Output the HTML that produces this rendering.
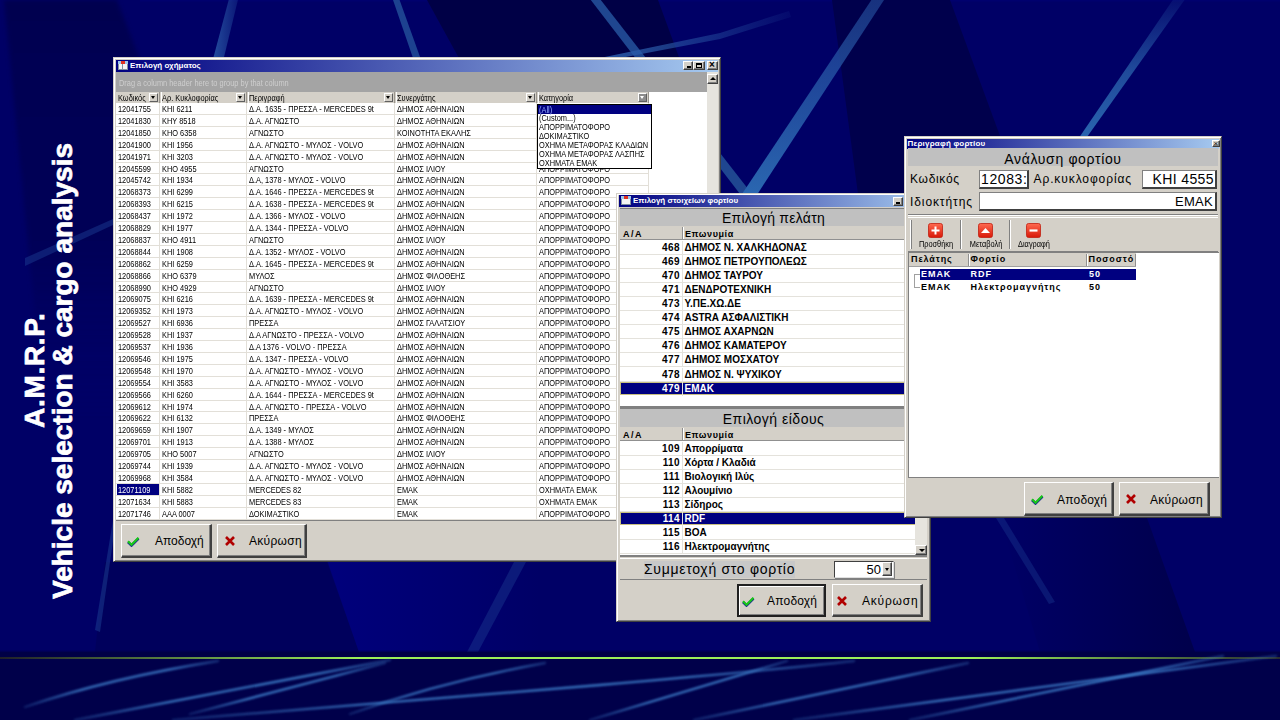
<!DOCTYPE html><html><head><meta charset="utf-8"><style>
*{margin:0;padding:0;box-sizing:border-box}
html,body{width:1280px;height:720px;overflow:hidden;background:#000070;font-family:"Liberation Sans",sans-serif}
.abs{position:absolute}
#bg{position:absolute;left:0;top:0}
.title{position:absolute;left:0;top:0;width:1280px;height:720px}
.rot{position:absolute;white-space:nowrap;color:#fff;font-weight:700;font-size:28px;transform:rotate(-90deg);transform-origin:0 0;-webkit-text-stroke:0.7px #fff}
.win{position:absolute;background:#D4D0C8;border-top:1px solid #D4D0C8;border-left:1px solid #D4D0C8;border-right:1px solid #404040;border-bottom:1px solid #404040;box-shadow:inset 1px 1px 0 #fff, inset -1px -1px 0 #808080}
.tb{position:absolute;background:linear-gradient(90deg,#000080,#A6CAF0);color:#fff;font-weight:700;white-space:nowrap}
.btn3d{position:absolute;background:#D4D0C8;border-top:1px solid #fff;border-left:1px solid #fff;border-right:1px solid #404040;border-bottom:1px solid #404040;box-shadow:inset -1px -1px 0 #808080}
.g1{position:absolute;white-space:nowrap;font-size:9.5px;color:#000;transform:scaleX(.78);transform-origin:0 0;line-height:12.5px}
.hl{position:absolute;height:1px;background:#E2DFD8}
.vl{position:absolute;width:1px;background:#E2DFD8}
</style></head><body><svg id="bg" width="1280" height="720" viewBox="0 0 1280 720"><defs>
<linearGradient id="gl" x1="0" x2="1" y1="0" y2="0"><stop offset="0" stop-color="#20202a"/><stop offset="0.28" stop-color="#9cf058"/><stop offset="0.76" stop-color="#9cf058"/><stop offset="1" stop-color="#282c30"/></linearGradient>
<linearGradient id="dkTL" x1="0" x2="0" y1="0" y2="1"><stop offset="0" stop-color="#000050"/><stop offset="0.6" stop-color="#000058"/><stop offset="1" stop-color="#000066" stop-opacity="0"/></linearGradient>
<linearGradient id="fadeUp" gradientUnits="userSpaceOnUse" x1="0" y1="0" x2="0" y2="140"><stop offset="0" stop-color="#2a62ac" stop-opacity="0.15"/><stop offset="0.5" stop-color="#2a62ac" stop-opacity="0.75"/><stop offset="1" stop-color="#2a66b0" stop-opacity="1"/></linearGradient>
<linearGradient id="fadeA" gradientUnits="userSpaceOnUse" x1="0" y1="0" x2="0" y2="192"><stop offset="0" stop-color="#2a5aa8" stop-opacity="0.55"/><stop offset="1" stop-color="#2a66b0" stop-opacity="1"/></linearGradient>
<linearGradient id="fadeC" gradientUnits="userSpaceOnUse" x1="610" y1="0" x2="790" y2="0"><stop offset="0" stop-color="#2a5aa8" stop-opacity="0.9"/><stop offset="1" stop-color="#2a5aa8" stop-opacity="0.1"/></linearGradient>
<linearGradient id="fadeL1" gradientUnits="userSpaceOnUse" x1="213" y1="0" x2="238" y2="0"><stop offset="0" stop-color="#2a5aa8" stop-opacity="0.85"/><stop offset="1" stop-color="#2a5aa8" stop-opacity="0.25"/></linearGradient>
<linearGradient id="botGlow" gradientUnits="userSpaceOnUse" x1="0" y1="0" x2="1280" y2="0"><stop offset="0" stop-color="#3a78c0"/><stop offset="1" stop-color="#3a78c0"/></linearGradient>
<filter id="blur1" x="-5%" y="-50%" width="110%" height="200%"><feGaussianBlur stdDeviation="0.9"/></filter>
<linearGradient id="dkstrip" x1="0" x2="0" y1="0" y2="1"><stop offset="0" stop-color="#000046" stop-opacity="0"/><stop offset="0.4" stop-color="#000046"/><stop offset="1" stop-color="#000046"/></linearGradient>
<linearGradient id="dkR" gradientUnits="userSpaceOnUse" x1="1000" y1="0" x2="1190" y2="0"><stop offset="0" stop-color="#00004c" stop-opacity="0"/><stop offset="1" stop-color="#00004c" stop-opacity="1"/></linearGradient>
<linearGradient id="ltM" gradientUnits="userSpaceOnUse" x1="330" y1="0" x2="540" y2="0"><stop offset="0" stop-color="#00007c" stop-opacity="1"/><stop offset="0.45" stop-color="#000078" stop-opacity="0.7"/><stop offset="1" stop-color="#000078" stop-opacity="0"/></linearGradient>
<filter id="blur2" x="-10%" y="-10%" width="120%" height="120%"><feGaussianBlur stdDeviation="2"/></filter>
</defs><rect width="1280" height="720" fill="#000066"/><polygon points="4,0 117,0 140,60 140,420 45,420" fill="url(#dkTL)" filter="url(#blur2)"/><rect x="140" y="0" width="1140" height="1.5" fill="#00006e"/><polygon points="427,0 658,0 680,60 460,60" fill="#000046"/><polygon points="832,0 950,0 1000,136 905,194 858,194" fill="#00004c"/><polygon points="105,562 327,562 359,652 95,652" fill="#00005c"/><polygon points="327,560 540,560 540,652 359,652" fill="url(#ltM)"/><polygon points="1000,518 1147,518 1195,652 1040,652" fill="url(#dkR)"/><polygon points="228.7,0 237.9,0 223.8,58 213.3,58" fill="url(#fadeL1)"/><polygon points="393,0 399.6,0 420.4,58 413,58" fill="#1d4290"/><polygon points="590.8,0 600.8,0 752,194 740,194" fill="#1f4690"/><polygon points="871.4,0 884,0 757.5,194 742,194" fill="url(#fadeA)"/><polygon points="789,11 791,17 720,39 610,60 600,58 720,33" fill="url(#fadeC)"/><polygon points="1172.8,0 1184.5,0 1087,137 1079.5,137" fill="url(#fadeUp)"/><polygon points="25,258 113,219 113,225 25,266" fill="#1a3a90" opacity="0.5"/><polygon points="113,520 116,520 100,632 95,630" fill="#1a3a90" opacity="0.55"/><polygon points="514,562 526,562 478,652 467,652" fill="#1a3a90" opacity="0.45"/><polygon points="996,518 1004,518 1055,602 1049,604" fill="#1a3a90" opacity="0.4"/><rect x="0" y="652" width="1280" height="68" fill="#00004a"/><rect x="0" y="650" width="1280" height="7" fill="url(#dkstrip)"/><rect x="0" y="657" width="1280" height="2" fill="url(#gl)"/><linearGradient id="bg1" gradientUnits="userSpaceOnUse" x1="25" y1="707" x2="218" y2="661"><stop offset="0" stop-color="#3c7cc8" stop-opacity="0.25"/><stop offset="0.3" stop-color="#3c7cc8" stop-opacity="0.85"/><stop offset="0.75" stop-color="#3c7cc8" stop-opacity="0.85"/><stop offset="1" stop-color="#3c7cc8" stop-opacity="0.35"/></linearGradient><path d="M25 707 Q110 678 218 661" stroke="url(#bg1)" stroke-width="2.3" fill="none" stroke-linecap="round" filter="url(#blur1)"/><linearGradient id="bg2" gradientUnits="userSpaceOnUse" x1="75" y1="720" x2="390" y2="660"><stop offset="0" stop-color="#3c7cc8" stop-opacity="0.25"/><stop offset="0.3" stop-color="#3c7cc8" stop-opacity="0.9"/><stop offset="0.75" stop-color="#3c7cc8" stop-opacity="0.9"/><stop offset="1" stop-color="#3c7cc8" stop-opacity="0.35"/></linearGradient><path d="M75 720 L390 660" stroke="url(#bg2)" stroke-width="2.3" fill="none" stroke-linecap="round" filter="url(#blur1)"/><linearGradient id="bg3" gradientUnits="userSpaceOnUse" x1="190" y1="714" x2="385" y2="663"><stop offset="0" stop-color="#3c7cc8" stop-opacity="0.25"/><stop offset="0.3" stop-color="#3c7cc8" stop-opacity="0.9"/><stop offset="0.75" stop-color="#3c7cc8" stop-opacity="0.9"/><stop offset="1" stop-color="#3c7cc8" stop-opacity="0.35"/></linearGradient><path d="M190 714 L385 663" stroke="url(#bg3)" stroke-width="2.3" fill="none" stroke-linecap="round" filter="url(#blur1)"/><linearGradient id="bg4" gradientUnits="userSpaceOnUse" x1="173" y1="720" x2="854" y2="661"><stop offset="0" stop-color="#3c7cc8" stop-opacity="0.25"/><stop offset="0.3" stop-color="#3c7cc8" stop-opacity="0.9"/><stop offset="0.75" stop-color="#3c7cc8" stop-opacity="0.9"/><stop offset="1" stop-color="#3c7cc8" stop-opacity="0.35"/></linearGradient><path d="M173 720 Q427 700 600 685 T854 661" stroke="url(#bg4)" stroke-width="2.3" fill="none" stroke-linecap="round" filter="url(#blur1)"/><linearGradient id="bg5" gradientUnits="userSpaceOnUse" x1="350" y1="714" x2="545" y2="663"><stop offset="0" stop-color="#3c7cc8" stop-opacity="0.25"/><stop offset="0.3" stop-color="#3c7cc8" stop-opacity="0.85"/><stop offset="0.75" stop-color="#3c7cc8" stop-opacity="0.85"/><stop offset="1" stop-color="#3c7cc8" stop-opacity="0.35"/></linearGradient><path d="M350 714 Q440 682 545 663" stroke="url(#bg5)" stroke-width="2.3" fill="none" stroke-linecap="round" filter="url(#blur1)"/><linearGradient id="bg6" gradientUnits="userSpaceOnUse" x1="590" y1="720" x2="787" y2="661"><stop offset="0" stop-color="#3c7cc8" stop-opacity="0.25"/><stop offset="0.3" stop-color="#3c7cc8" stop-opacity="0.9"/><stop offset="0.75" stop-color="#3c7cc8" stop-opacity="0.9"/><stop offset="1" stop-color="#3c7cc8" stop-opacity="0.35"/></linearGradient><path d="M590 720 L787 661" stroke="url(#bg6)" stroke-width="2.3" fill="none" stroke-linecap="round" filter="url(#blur1)"/><linearGradient id="bg7" gradientUnits="userSpaceOnUse" x1="694" y1="720" x2="968" y2="663"><stop offset="0" stop-color="#3c7cc8" stop-opacity="0.25"/><stop offset="0.3" stop-color="#3c7cc8" stop-opacity="0.85"/><stop offset="0.75" stop-color="#3c7cc8" stop-opacity="0.85"/><stop offset="1" stop-color="#3c7cc8" stop-opacity="0.35"/></linearGradient><path d="M694 720 Q850 688 968 663" stroke="url(#bg7)" stroke-width="2.3" fill="none" stroke-linecap="round" filter="url(#blur1)"/><linearGradient id="bg8" gradientUnits="userSpaceOnUse" x1="794" y1="720" x2="1276" y2="656"><stop offset="0" stop-color="#3c7cc8" stop-opacity="0.25"/><stop offset="0.3" stop-color="#3c7cc8" stop-opacity="0.9"/><stop offset="0.75" stop-color="#3c7cc8" stop-opacity="0.9"/><stop offset="1" stop-color="#3c7cc8" stop-opacity="0.35"/></linearGradient><path d="M794 720 L1276 656" stroke="url(#bg8)" stroke-width="2.3" fill="none" stroke-linecap="round" filter="url(#blur1)"/><linearGradient id="bg9" gradientUnits="userSpaceOnUse" x1="910" y1="720" x2="1223" y2="656"><stop offset="0" stop-color="#3c7cc8" stop-opacity="0.25"/><stop offset="0.3" stop-color="#3c7cc8" stop-opacity="0.9"/><stop offset="0.75" stop-color="#3c7cc8" stop-opacity="0.9"/><stop offset="1" stop-color="#3c7cc8" stop-opacity="0.35"/></linearGradient><path d="M910 720 L1223 656" stroke="url(#bg9)" stroke-width="2.3" fill="none" stroke-linecap="round" filter="url(#blur1)"/></svg><div class="rot" style="left:47px;top:599px;">Vehicle selection &amp; cargo analysis</div><div class="rot" style="left:19px;top:428px;letter-spacing:0.7px">A.M.R.P.</div><div class="win" style="left:113px;top:57px;width:608px;height:505px"></div><div class="tb" style="left:116px;top:60px;width:602px;height:12px;font-size:8px;line-height:12px;padding-left:14px">Επιλογή οχήματος</div><div class="abs" style="left:118px;top:61px;width:10px;height:9px;background:#f4f4f4;border:1px solid #8090a0"></div><div class="abs" style="left:118px;top:61px;width:10px;height:3px;background:#9ec8e8"></div><div class="abs" style="left:121px;top:61px;width:4px;height:3px;background:#e03020"></div><div class="abs" style="left:122px;top:64px;width:1px;height:6px;background:#8090a0"></div><div class="btn3d" style="left:683px;top:61px;width:10px;height:9px"></div><div class="btn3d" style="left:693px;top:61px;width:12px;height:9px"></div><div class="btn3d" style="left:707px;top:61px;width:11px;height:9px"></div><div class="abs" style="left:687px;top:66px;width:4px;height:2px;background:#000"></div><div class="abs" style="left:696px;top:63px;width:6px;height:5px;border:1px solid #000;border-top-width:2px"></div><div class="abs" style="left:709px;top:60px;font-size:10px;line-height:10px;font-weight:700;color:#000">×</div><div class="abs" style="left:116px;top:72px;width:591px;height:20px;background:#A4A4A4"></div><div class="abs" style="left:118.5px;top:76.5px;font-size:9.5px;line-height:12px;color:#cecece;white-space:nowrap;transform:scaleX(.78);transform-origin:0 0">Drag a column header here to group by that column</div><div class="abs" style="left:707px;top:72px;width:11px;height:449px;background:#E6E4DE"></div><div class="btn3d" style="left:707px;top:74px;width:11px;height:10px"></div><div class="abs" style="left:710px;top:77px;width:0;height:0;border-left:3px solid transparent;border-right:3px solid transparent;border-bottom:3px solid #000"></div><div class="abs" style="left:116px;top:92px;width:591px;height:429px;background:#fff"></div><div class="abs" style="left:116px;top:92px;width:533px;height:11px;background:#D4D0C8"></div><div class="abs" style="left:159px;top:92px;width:1px;height:11px;background:#9a968e"></div><div class="g1" style="left:118px;top:92px;color:#000">Κωδικός</div><div class="abs" style="left:149px;top:93px;width:9px;height:9px;background:#D4D0C8;border-top:1px solid #fff;border-left:1px solid #fff;border-right:1px solid #606060;border-bottom:1px solid #606060"></div><div class="abs" style="left:151px;top:96px;width:0;height:0;border-left:2.5px solid transparent;border-right:2.5px solid transparent;border-top:3px solid #000"></div><div class="abs" style="left:161px;top:92px;width:1px;height:11px;background:#fff"></div><div class="abs" style="left:245.5px;top:92px;width:1px;height:11px;background:#9a968e"></div><div class="g1" style="left:162px;top:92px;color:#000">Αρ. Κυκλοφορίας</div><div class="abs" style="left:235.5px;top:93px;width:9px;height:9px;background:#D4D0C8;border-top:1px solid #fff;border-left:1px solid #fff;border-right:1px solid #606060;border-bottom:1px solid #606060"></div><div class="abs" style="left:237.5px;top:96px;width:0;height:0;border-left:2.5px solid transparent;border-right:2.5px solid transparent;border-top:3px solid #000"></div><div class="abs" style="left:247.5px;top:92px;width:1px;height:11px;background:#fff"></div><div class="abs" style="left:393.5px;top:92px;width:1px;height:11px;background:#9a968e"></div><div class="g1" style="left:248.5px;top:92px;color:#000">Περιγραφή</div><div class="abs" style="left:383.5px;top:93px;width:9px;height:9px;background:#D4D0C8;border-top:1px solid #fff;border-left:1px solid #fff;border-right:1px solid #606060;border-bottom:1px solid #606060"></div><div class="abs" style="left:385.5px;top:96px;width:0;height:0;border-left:2.5px solid transparent;border-right:2.5px solid transparent;border-top:3px solid #000"></div><div class="abs" style="left:395.5px;top:92px;width:1px;height:11px;background:#fff"></div><div class="abs" style="left:535.5px;top:92px;width:1px;height:11px;background:#9a968e"></div><div class="g1" style="left:396.5px;top:92px;color:#000">Συνεργάτης</div><div class="abs" style="left:525.5px;top:93px;width:9px;height:9px;background:#D4D0C8;border-top:1px solid #fff;border-left:1px solid #fff;border-right:1px solid #606060;border-bottom:1px solid #606060"></div><div class="abs" style="left:527.5px;top:96px;width:0;height:0;border-left:2.5px solid transparent;border-right:2.5px solid transparent;border-top:3px solid #000"></div><div class="abs" style="left:537.5px;top:92px;width:1px;height:11px;background:#fff"></div><div class="abs" style="left:648px;top:92px;width:1px;height:11px;background:#9a968e"></div><div class="g1" style="left:538.5px;top:92px;color:#000">Κατηγορία</div><div class="abs" style="left:638px;top:93px;width:9px;height:9px;background:#8c8c8c;border-top:1px solid #fff;border-left:1px solid #fff;border-right:1px solid #606060;border-bottom:1px solid #606060"></div><div class="abs" style="left:640px;top:96px;width:0;height:0;border-left:2.5px solid transparent;border-right:2.5px solid transparent;border-top:3px solid #fff"></div><div class="vl" style="left:159px;top:103px;height:418px"></div><div class="vl" style="left:245.5px;top:103px;height:418px"></div><div class="vl" style="left:393.5px;top:103px;height:418px"></div><div class="vl" style="left:535.5px;top:103px;height:418px"></div><div class="vl" style="left:648px;top:103px;height:418px"></div><div class="hl" style="left:116px;top:113.9px;width:533px"></div><div class="g1" style="left:118px;top:103.0px;color:#000">12041755</div><div class="g1" style="left:162px;top:103.0px;color:#000">KHI 6211</div><div class="g1" style="left:248.5px;top:103.0px;color:#000">Δ.Α. 1635 - ΠΡΕΣΣΑ - MERCEDES 9t</div><div class="g1" style="left:396.5px;top:103.0px;color:#000">ΔΗΜΟΣ ΑΘΗΝΑΙΩΝ</div><div class="g1" style="left:538.5px;top:103.0px;color:#000">ΑΠΟΡΡΙΜΑΤΟΦΟΡΟ</div><div class="hl" style="left:116px;top:125.8px;width:533px"></div><div class="g1" style="left:118px;top:114.9px;color:#000">12041830</div><div class="g1" style="left:162px;top:114.9px;color:#000">KHY 8518</div><div class="g1" style="left:248.5px;top:114.9px;color:#000">Δ.Α. ΑΓΝΩΣΤΟ</div><div class="g1" style="left:396.5px;top:114.9px;color:#000">ΔΗΜΟΣ ΑΘΗΝΑΙΩΝ</div><div class="g1" style="left:538.5px;top:114.9px;color:#000">ΑΠΟΡΡΙΜΑΤΟΦΟΡΟ</div><div class="hl" style="left:116px;top:137.7px;width:533px"></div><div class="g1" style="left:118px;top:126.8px;color:#000">12041850</div><div class="g1" style="left:162px;top:126.8px;color:#000">KHO 6358</div><div class="g1" style="left:248.5px;top:126.8px;color:#000">ΑΓΝΩΣΤΟ</div><div class="g1" style="left:396.5px;top:126.8px;color:#000">ΚΟΙΝΟΤΗΤΑ ΕΚΑΛΗΣ</div><div class="g1" style="left:538.5px;top:126.8px;color:#000">ΑΠΟΡΡΙΜΑΤΟΦΟΡΟ</div><div class="hl" style="left:116px;top:149.6px;width:533px"></div><div class="g1" style="left:118px;top:138.7px;color:#000">12041900</div><div class="g1" style="left:162px;top:138.7px;color:#000">KHI 1956</div><div class="g1" style="left:248.5px;top:138.7px;color:#000">Δ.Α. ΑΓΝΩΣΤΟ - ΜΥΛΟΣ - VOLVO</div><div class="g1" style="left:396.5px;top:138.7px;color:#000">ΔΗΜΟΣ ΑΘΗΝΑΙΩΝ</div><div class="g1" style="left:538.5px;top:138.7px;color:#000">ΑΠΟΡΡΙΜΑΤΟΦΟΡΟ</div><div class="hl" style="left:116px;top:161.5px;width:533px"></div><div class="g1" style="left:118px;top:150.6px;color:#000">12041971</div><div class="g1" style="left:162px;top:150.6px;color:#000">KHI 3203</div><div class="g1" style="left:248.5px;top:150.6px;color:#000">Δ.Α. ΑΓΝΩΣΤΟ - ΜΥΛΟΣ - VOLVO</div><div class="g1" style="left:396.5px;top:150.6px;color:#000">ΔΗΜΟΣ ΑΘΗΝΑΙΩΝ</div><div class="g1" style="left:538.5px;top:150.6px;color:#000">ΑΠΟΡΡΙΜΑΤΟΦΟΡΟ</div><div class="hl" style="left:116px;top:173.4px;width:533px"></div><div class="g1" style="left:118px;top:162.5px;color:#000">12045599</div><div class="g1" style="left:162px;top:162.5px;color:#000">KHO 4955</div><div class="g1" style="left:248.5px;top:162.5px;color:#000">ΑΓΝΩΣΤΟ</div><div class="g1" style="left:396.5px;top:162.5px;color:#000">ΔΗΜΟΣ ΙΛΙΟΥ</div><div class="g1" style="left:538.5px;top:162.5px;color:#000">ΑΠΟΡΡΙΜΑΤΟΦΟΡΟ</div><div class="hl" style="left:116px;top:185.3px;width:533px"></div><div class="g1" style="left:118px;top:174.4px;color:#000">12045742</div><div class="g1" style="left:162px;top:174.4px;color:#000">KHI 1934</div><div class="g1" style="left:248.5px;top:174.4px;color:#000">Δ.Α, 1378 - ΜΥΛΟΣ - VOLVO</div><div class="g1" style="left:396.5px;top:174.4px;color:#000">ΔΗΜΟΣ ΑΘΗΝΑΙΩΝ</div><div class="g1" style="left:538.5px;top:174.4px;color:#000">ΑΠΟΡΡΙΜΑΤΟΦΟΡΟ</div><div class="hl" style="left:116px;top:197.2px;width:533px"></div><div class="g1" style="left:118px;top:186.3px;color:#000">12068373</div><div class="g1" style="left:162px;top:186.3px;color:#000">KHI 6299</div><div class="g1" style="left:248.5px;top:186.3px;color:#000">Δ.Α. 1646 - ΠΡΕΣΣΑ - MERCEDES 9t</div><div class="g1" style="left:396.5px;top:186.3px;color:#000">ΔΗΜΟΣ ΑΘΗΝΑΙΩΝ</div><div class="g1" style="left:538.5px;top:186.3px;color:#000">ΑΠΟΡΡΙΜΑΤΟΦΟΡΟ</div><div class="hl" style="left:116px;top:209.1px;width:533px"></div><div class="g1" style="left:118px;top:198.2px;color:#000">12068393</div><div class="g1" style="left:162px;top:198.2px;color:#000">KHI 6215</div><div class="g1" style="left:248.5px;top:198.2px;color:#000">Δ.Α. 1638 - ΠΡΕΣΣΑ - MERCEDES 9t</div><div class="g1" style="left:396.5px;top:198.2px;color:#000">ΔΗΜΟΣ ΑΘΗΝΑΙΩΝ</div><div class="g1" style="left:538.5px;top:198.2px;color:#000">ΑΠΟΡΡΙΜΑΤΟΦΟΡΟ</div><div class="hl" style="left:116px;top:221.0px;width:533px"></div><div class="g1" style="left:118px;top:210.1px;color:#000">12068437</div><div class="g1" style="left:162px;top:210.1px;color:#000">KHI 1972</div><div class="g1" style="left:248.5px;top:210.1px;color:#000">Δ.Α. 1366 - ΜΥΛΟΣ - VOLVO</div><div class="g1" style="left:396.5px;top:210.1px;color:#000">ΔΗΜΟΣ ΑΘΗΝΑΙΩΝ</div><div class="g1" style="left:538.5px;top:210.1px;color:#000">ΑΠΟΡΡΙΜΑΤΟΦΟΡΟ</div><div class="hl" style="left:116px;top:232.9px;width:533px"></div><div class="g1" style="left:118px;top:222.0px;color:#000">12068829</div><div class="g1" style="left:162px;top:222.0px;color:#000">KHI 1977</div><div class="g1" style="left:248.5px;top:222.0px;color:#000">Δ.Α. 1344 - ΠΡΕΣΣΑ - VOLVO</div><div class="g1" style="left:396.5px;top:222.0px;color:#000">ΔΗΜΟΣ ΑΘΗΝΑΙΩΝ</div><div class="g1" style="left:538.5px;top:222.0px;color:#000">ΑΠΟΡΡΙΜΑΤΟΦΟΡΟ</div><div class="hl" style="left:116px;top:244.8px;width:533px"></div><div class="g1" style="left:118px;top:233.9px;color:#000">12068837</div><div class="g1" style="left:162px;top:233.9px;color:#000">KHO 4911</div><div class="g1" style="left:248.5px;top:233.9px;color:#000">ΑΓΝΩΣΤΟ</div><div class="g1" style="left:396.5px;top:233.9px;color:#000">ΔΗΜΟΣ ΙΛΙΟΥ</div><div class="g1" style="left:538.5px;top:233.9px;color:#000">ΑΠΟΡΡΙΜΑΤΟΦΟΡΟ</div><div class="hl" style="left:116px;top:256.7px;width:533px"></div><div class="g1" style="left:118px;top:245.8px;color:#000">12068844</div><div class="g1" style="left:162px;top:245.8px;color:#000">KHI 1908</div><div class="g1" style="left:248.5px;top:245.8px;color:#000">Δ.Α. 1352 - ΜΥΛΟΣ - VOLVO</div><div class="g1" style="left:396.5px;top:245.8px;color:#000">ΔΗΜΟΣ ΑΘΗΝΑΙΩΝ</div><div class="g1" style="left:538.5px;top:245.8px;color:#000">ΑΠΟΡΡΙΜΑΤΟΦΟΡΟ</div><div class="hl" style="left:116px;top:268.6px;width:533px"></div><div class="g1" style="left:118px;top:257.7px;color:#000">12068862</div><div class="g1" style="left:162px;top:257.7px;color:#000">KHI 6259</div><div class="g1" style="left:248.5px;top:257.7px;color:#000">Δ.Α. 1645 - ΠΡΕΣΣΑ - MERCEDES 9t</div><div class="g1" style="left:396.5px;top:257.7px;color:#000">ΔΗΜΟΣ ΑΘΗΝΑΙΩΝ</div><div class="g1" style="left:538.5px;top:257.7px;color:#000">ΑΠΟΡΡΙΜΑΤΟΦΟΡΟ</div><div class="hl" style="left:116px;top:280.5px;width:533px"></div><div class="g1" style="left:118px;top:269.6px;color:#000">12068866</div><div class="g1" style="left:162px;top:269.6px;color:#000">KHO 6379</div><div class="g1" style="left:248.5px;top:269.6px;color:#000">ΜΥΛΟΣ</div><div class="g1" style="left:396.5px;top:269.6px;color:#000">ΔΗΜΟΣ ΦΙΛΟΘΕΗΣ</div><div class="g1" style="left:538.5px;top:269.6px;color:#000">ΑΠΟΡΡΙΜΑΤΟΦΟΡΟ</div><div class="hl" style="left:116px;top:292.4px;width:533px"></div><div class="g1" style="left:118px;top:281.5px;color:#000">12068990</div><div class="g1" style="left:162px;top:281.5px;color:#000">KHO 4929</div><div class="g1" style="left:248.5px;top:281.5px;color:#000">ΑΓΝΩΣΤΟ</div><div class="g1" style="left:396.5px;top:281.5px;color:#000">ΔΗΜΟΣ ΙΛΙΟΥ</div><div class="g1" style="left:538.5px;top:281.5px;color:#000">ΑΠΟΡΡΙΜΑΤΟΦΟΡΟ</div><div class="hl" style="left:116px;top:304.3px;width:533px"></div><div class="g1" style="left:118px;top:293.4px;color:#000">12069075</div><div class="g1" style="left:162px;top:293.4px;color:#000">KHI 6216</div><div class="g1" style="left:248.5px;top:293.4px;color:#000">Δ.Α. 1639 - ΠΡΕΣΣΑ - MERCEDES 9t</div><div class="g1" style="left:396.5px;top:293.4px;color:#000">ΔΗΜΟΣ ΑΘΗΝΑΙΩΝ</div><div class="g1" style="left:538.5px;top:293.4px;color:#000">ΑΠΟΡΡΙΜΑΤΟΦΟΡΟ</div><div class="hl" style="left:116px;top:316.2px;width:533px"></div><div class="g1" style="left:118px;top:305.3px;color:#000">12069352</div><div class="g1" style="left:162px;top:305.3px;color:#000">KHI 1973</div><div class="g1" style="left:248.5px;top:305.3px;color:#000">Δ.Α. ΑΓΝΩΣΤΟ - ΜΥΛΟΣ - VOLVO</div><div class="g1" style="left:396.5px;top:305.3px;color:#000">ΔΗΜΟΣ ΑΘΗΝΑΙΩΝ</div><div class="g1" style="left:538.5px;top:305.3px;color:#000">ΑΠΟΡΡΙΜΑΤΟΦΟΡΟ</div><div class="hl" style="left:116px;top:328.1px;width:533px"></div><div class="g1" style="left:118px;top:317.2px;color:#000">12069527</div><div class="g1" style="left:162px;top:317.2px;color:#000">KHI 6936</div><div class="g1" style="left:248.5px;top:317.2px;color:#000">ΠΡΕΣΣΑ</div><div class="g1" style="left:396.5px;top:317.2px;color:#000">ΔΗΜΟΣ ΓΑΛΑΤΣΙΟΥ</div><div class="g1" style="left:538.5px;top:317.2px;color:#000">ΑΠΟΡΡΙΜΑΤΟΦΟΡΟ</div><div class="hl" style="left:116px;top:340.0px;width:533px"></div><div class="g1" style="left:118px;top:329.1px;color:#000">12069528</div><div class="g1" style="left:162px;top:329.1px;color:#000">KHI 1937</div><div class="g1" style="left:248.5px;top:329.1px;color:#000">Δ.Α ΑΓΝΩΣΤΟ - ΠΡΕΣΣΑ - VOLVO</div><div class="g1" style="left:396.5px;top:329.1px;color:#000">ΔΗΜΟΣ ΑΘΗΝΑΙΩΝ</div><div class="g1" style="left:538.5px;top:329.1px;color:#000">ΑΠΟΡΡΙΜΑΤΟΦΟΡΟ</div><div class="hl" style="left:116px;top:351.9px;width:533px"></div><div class="g1" style="left:118px;top:341.0px;color:#000">12069537</div><div class="g1" style="left:162px;top:341.0px;color:#000">KHI 1936</div><div class="g1" style="left:248.5px;top:341.0px;color:#000">Δ.Α 1376 - VOLVO - ΠΡΕΣΣΑ</div><div class="g1" style="left:396.5px;top:341.0px;color:#000">ΔΗΜΟΣ ΑΘΗΝΑΙΩΝ</div><div class="g1" style="left:538.5px;top:341.0px;color:#000">ΑΠΟΡΡΙΜΑΤΟΦΟΡΟ</div><div class="hl" style="left:116px;top:363.8px;width:533px"></div><div class="g1" style="left:118px;top:352.9px;color:#000">12069546</div><div class="g1" style="left:162px;top:352.9px;color:#000">KHI 1975</div><div class="g1" style="left:248.5px;top:352.9px;color:#000">Δ.Α. 1347 - ΠΡΕΣΣΑ - VOLVO</div><div class="g1" style="left:396.5px;top:352.9px;color:#000">ΔΗΜΟΣ ΑΘΗΝΑΙΩΝ</div><div class="g1" style="left:538.5px;top:352.9px;color:#000">ΑΠΟΡΡΙΜΑΤΟΦΟΡΟ</div><div class="hl" style="left:116px;top:375.7px;width:533px"></div><div class="g1" style="left:118px;top:364.8px;color:#000">12069548</div><div class="g1" style="left:162px;top:364.8px;color:#000">KHI 1970</div><div class="g1" style="left:248.5px;top:364.8px;color:#000">Δ.Α. ΑΓΝΩΣΤΟ - ΜΥΛΟΣ - VOLVO</div><div class="g1" style="left:396.5px;top:364.8px;color:#000">ΔΗΜΟΣ ΑΘΗΝΑΙΩΝ</div><div class="g1" style="left:538.5px;top:364.8px;color:#000">ΑΠΟΡΡΙΜΑΤΟΦΟΡΟ</div><div class="hl" style="left:116px;top:387.6px;width:533px"></div><div class="g1" style="left:118px;top:376.7px;color:#000">12069554</div><div class="g1" style="left:162px;top:376.7px;color:#000">KHI 3583</div><div class="g1" style="left:248.5px;top:376.7px;color:#000">Δ.Α. ΑΓΝΩΣΤΟ - ΜΥΛΟΣ - VOLVO</div><div class="g1" style="left:396.5px;top:376.7px;color:#000">ΔΗΜΟΣ ΑΘΗΝΑΙΩΝ</div><div class="g1" style="left:538.5px;top:376.7px;color:#000">ΑΠΟΡΡΙΜΑΤΟΦΟΡΟ</div><div class="hl" style="left:116px;top:399.5px;width:533px"></div><div class="g1" style="left:118px;top:388.6px;color:#000">12069566</div><div class="g1" style="left:162px;top:388.6px;color:#000">KHI 6260</div><div class="g1" style="left:248.5px;top:388.6px;color:#000">Δ.Α. 1644 - ΠΡΕΣΣΑ - MERCEDES 9t</div><div class="g1" style="left:396.5px;top:388.6px;color:#000">ΔΗΜΟΣ ΑΘΗΝΑΙΩΝ</div><div class="g1" style="left:538.5px;top:388.6px;color:#000">ΑΠΟΡΡΙΜΑΤΟΦΟΡΟ</div><div class="hl" style="left:116px;top:411.4px;width:533px"></div><div class="g1" style="left:118px;top:400.5px;color:#000">12069612</div><div class="g1" style="left:162px;top:400.5px;color:#000">KHI 1974</div><div class="g1" style="left:248.5px;top:400.5px;color:#000">Δ.Α. ΑΓΝΩΣΤΟ - ΠΡΕΣΣΑ - VOLVO</div><div class="g1" style="left:396.5px;top:400.5px;color:#000">ΔΗΜΟΣ ΑΘΗΝΑΙΩΝ</div><div class="g1" style="left:538.5px;top:400.5px;color:#000">ΑΠΟΡΡΙΜΑΤΟΦΟΡΟ</div><div class="hl" style="left:116px;top:423.3px;width:533px"></div><div class="g1" style="left:118px;top:412.4px;color:#000">12069622</div><div class="g1" style="left:162px;top:412.4px;color:#000">KHI 6132</div><div class="g1" style="left:248.5px;top:412.4px;color:#000">ΠΡΕΣΣΑ</div><div class="g1" style="left:396.5px;top:412.4px;color:#000">ΔΗΜΟΣ ΦΙΛΟΘΕΗΣ</div><div class="g1" style="left:538.5px;top:412.4px;color:#000">ΑΠΟΡΡΙΜΑΤΟΦΟΡΟ</div><div class="hl" style="left:116px;top:435.2px;width:533px"></div><div class="g1" style="left:118px;top:424.3px;color:#000">12069659</div><div class="g1" style="left:162px;top:424.3px;color:#000">KHI 1907</div><div class="g1" style="left:248.5px;top:424.3px;color:#000">Δ.Α. 1349 - ΜΥΛΟΣ</div><div class="g1" style="left:396.5px;top:424.3px;color:#000">ΔΗΜΟΣ ΑΘΗΝΑΙΩΝ</div><div class="g1" style="left:538.5px;top:424.3px;color:#000">ΑΠΟΡΡΙΜΑΤΟΦΟΡΟ</div><div class="hl" style="left:116px;top:447.1px;width:533px"></div><div class="g1" style="left:118px;top:436.2px;color:#000">12069701</div><div class="g1" style="left:162px;top:436.2px;color:#000">KHI 1913</div><div class="g1" style="left:248.5px;top:436.2px;color:#000">Δ.Α. 1388 - ΜΥΛΟΣ</div><div class="g1" style="left:396.5px;top:436.2px;color:#000">ΔΗΜΟΣ ΑΘΗΝΑΙΩΝ</div><div class="g1" style="left:538.5px;top:436.2px;color:#000">ΑΠΟΡΡΙΜΑΤΟΦΟΡΟ</div><div class="hl" style="left:116px;top:459.0px;width:533px"></div><div class="g1" style="left:118px;top:448.1px;color:#000">12069705</div><div class="g1" style="left:162px;top:448.1px;color:#000">KHO 5007</div><div class="g1" style="left:248.5px;top:448.1px;color:#000">ΑΓΝΩΣΤΟ</div><div class="g1" style="left:396.5px;top:448.1px;color:#000">ΔΗΜΟΣ ΙΛΙΟΥ</div><div class="g1" style="left:538.5px;top:448.1px;color:#000">ΑΠΟΡΡΙΜΑΤΟΦΟΡΟ</div><div class="hl" style="left:116px;top:470.9px;width:533px"></div><div class="g1" style="left:118px;top:460.0px;color:#000">12069744</div><div class="g1" style="left:162px;top:460.0px;color:#000">KHI 1939</div><div class="g1" style="left:248.5px;top:460.0px;color:#000">Δ.Α. ΑΓΝΩΣΤΟ - ΜΥΛΟΣ - VOLVO</div><div class="g1" style="left:396.5px;top:460.0px;color:#000">ΔΗΜΟΣ ΑΘΗΝΑΙΩΝ</div><div class="g1" style="left:538.5px;top:460.0px;color:#000">ΑΠΟΡΡΙΜΑΤΟΦΟΡΟ</div><div class="hl" style="left:116px;top:482.8px;width:533px"></div><div class="g1" style="left:118px;top:471.9px;color:#000">12069968</div><div class="g1" style="left:162px;top:471.9px;color:#000">KHI 3584</div><div class="g1" style="left:248.5px;top:471.9px;color:#000">Δ.Α. ΑΓΝΩΣΤΟ - ΜΥΛΟΣ - VOLVO</div><div class="g1" style="left:396.5px;top:471.9px;color:#000">ΔΗΜΟΣ ΑΘΗΝΑΙΩΝ</div><div class="g1" style="left:538.5px;top:471.9px;color:#000">ΑΠΟΡΡΙΜΑΤΟΦΟΡΟ</div><div class="hl" style="left:116px;top:494.7px;width:533px"></div><div class="abs" style="left:117px;top:483.8px;width:42px;height:10.9px;background:#000080"></div><div class="g1" style="left:118px;top:483.8px;color:#fff">12071109</div><div class="g1" style="left:162px;top:483.8px;color:#000">KHI 5882</div><div class="g1" style="left:248.5px;top:483.8px;color:#000">MERCEDES 82</div><div class="g1" style="left:396.5px;top:483.8px;color:#000">EMAK</div><div class="g1" style="left:538.5px;top:483.8px;color:#000">ΟΧΗΜΑΤΑ EMAK</div><div class="hl" style="left:116px;top:506.6px;width:533px"></div><div class="g1" style="left:118px;top:495.7px;color:#000">12071634</div><div class="g1" style="left:162px;top:495.7px;color:#000">KHI 5883</div><div class="g1" style="left:248.5px;top:495.7px;color:#000">MERCEDES 83</div><div class="g1" style="left:396.5px;top:495.7px;color:#000">EMAK</div><div class="g1" style="left:538.5px;top:495.7px;color:#000">ΟΧΗΜΑΤΑ EMAK</div><div class="hl" style="left:116px;top:518.5px;width:533px"></div><div class="g1" style="left:118px;top:507.6px;color:#000">12071746</div><div class="g1" style="left:162px;top:507.6px;color:#000">AAA 0007</div><div class="g1" style="left:248.5px;top:507.6px;color:#000">ΔΟΚΙΜΑΣΤΙΚΟ</div><div class="g1" style="left:396.5px;top:507.6px;color:#000">EMAK</div><div class="g1" style="left:538.5px;top:507.6px;color:#000">ΑΠΟΡΡΙΜΑΤΟΦΟΡΟ</div><div class="abs" style="left:116px;top:520px;width:602px;height:1px;background:#808080"></div><div class="abs" style="left:121px;top:524px;width:91px;height:33.5px;background:#D4D0C8;border-top:1px solid #fff;border-left:1px solid #fff;border-right:2px solid #404040;border-bottom:2px solid #404040;box-shadow:inset -1px -1px 0 #808080"></div><svg class="abs" style="left:126px;top:534.75px" width="14" height="12" viewBox="0 0 14 12"><path d="M2 7 L5.5 10.5 L12.5 3.5" stroke="#1a2a90" stroke-width="2.6" fill="none"/><path d="M2 6.3 L5.5 9.8 L12.5 2.8" stroke="#18c818" stroke-width="2.2" fill="none"/></svg><div class="abs" style="left:155px;top:525px;height:33.5px;line-height:33.5px;font-size:12px;letter-spacing:0px;color:#000;white-space:nowrap">Αποδοχή</div><div class="abs" style="left:217px;top:524px;width:90px;height:33.5px;background:#D4D0C8;border-top:1px solid #fff;border-left:1px solid #fff;border-right:2px solid #404040;border-bottom:2px solid #404040;box-shadow:inset -1px -1px 0 #808080"></div><svg class="abs" style="left:224px;top:534.75px" width="12" height="12" viewBox="0 0 12 12"><path d="M2 2 L10 10 M10 2 L2 10" stroke="#b00000" stroke-width="2.6" fill="none"/></svg><div class="abs" style="left:249px;top:525px;height:33.5px;line-height:33.5px;font-size:12px;letter-spacing:0.3px;color:#000;white-space:nowrap">Ακύρωση</div><div class="abs" style="left:537px;top:104px;width:115px;height:65px;background:#fff;border:1px solid #000"></div><div class="abs" style="left:538px;top:105px;width:113px;height:8.5px;background:#000080"></div><div class="g1" style="left:539px;top:103.5px;color:#9ab0ff">(All)</div><div class="g1" style="left:539px;top:112.4px;color:#000">(Custom...)</div><div class="g1" style="left:539px;top:121.3px;color:#000">ΑΠΟΡΡΙΜΑΤΟΦΟΡΟ</div><div class="g1" style="left:539px;top:130.2px;color:#000">ΔΟΚΙΜΑΣΤΙΚΟ</div><div class="g1" style="left:539px;top:139.1px;color:#000">ΟΧΗΜΑ ΜΕΤΑΦΟΡΑΣ ΚΛΑΔΙΩΝ</div><div class="g1" style="left:539px;top:148.0px;color:#000">ΟΧΗΜΑ ΜΕΤΑΦΟΡΑΣ ΛΑΣΠΗΣ</div><div class="g1" style="left:539px;top:156.9px;color:#000">ΟΧΗΜΑΤΑ EMAK</div><div class="win" style="left:616px;top:193px;width:315px;height:429px"></div><div class="tb" style="left:619px;top:195px;width:309px;height:12px;font-size:8px;line-height:12px;padding-left:14px">Επιλογή στοιχείων φορτίου</div><div class="abs" style="left:621px;top:196px;width:10px;height:9px;background:#f4f4f4;border:1px solid #8090a0"></div><div class="abs" style="left:621px;top:196px;width:10px;height:3px;background:#9ec8e8"></div><div class="abs" style="left:624px;top:196px;width:4px;height:3px;background:#e03020"></div><div class="btn3d" style="left:893px;top:197px;width:10px;height:9px"></div><div class="abs" style="left:896px;top:202px;width:4px;height:2px;background:#000"></div><div class="abs" style="left:620px;top:208px;width:307px;height:19px;background:#C0C0C0;border-top:1px solid #808080;border-bottom:1px solid #808080"></div><div class="abs" style="left:620px;top:208px;width:307px;height:19px;line-height:21px;text-align:center;font-size:14px;letter-spacing:0.25px;color:#000;white-space:nowrap;padding-left:0px">Επιλογή πελάτη</div><div class="abs" style="left:620px;top:226px;width:307px;height:14px;background:#D4D0C8;border-bottom:1px solid #909090"></div><div class="abs" style="left:682px;top:227px;width:1px;height:12px;background:#909090"></div><div class="abs" style="left:683px;top:227px;width:1px;height:12px;background:#fff"></div><div class="abs" style="left:623px;top:226px;height:14px;line-height:16px;font-size:9px;font-weight:700;letter-spacing:1.5px;white-space:nowrap">A/A</div><div class="abs" style="left:685px;top:226px;height:14px;line-height:16px;font-size:9px;font-weight:700;letter-spacing:0.6px;white-space:nowrap">Επωνυμία</div><div class="abs" style="left:620px;top:240px;width:307px;height:167px;background:#fff"></div><div class="abs" style="left:620px;top:254.0px;width:307px;height:1px;background:#E4E2DC"></div><div class="abs" style="left:682px;top:241.0px;width:1px;height:14px;background:#E4E2DC"></div><div class="abs" style="left:620px;top:241.0px;width:60px;height:14px;line-height:14px;text-align:right;font-size:10px;font-weight:700;letter-spacing:0.4px;color:#000;white-space:nowrap">468</div><div class="abs" style="left:684.5px;top:241.0px;height:14px;line-height:14px;font-size:10px;font-weight:700;letter-spacing:0px;color:#000;white-space:nowrap">ΔΗΜΟΣ Ν. ΧΑΛΚΗΔΟΝΑΣ</div><div class="abs" style="left:620px;top:268.06px;width:307px;height:1px;background:#E4E2DC"></div><div class="abs" style="left:682px;top:255.06px;width:1px;height:14px;background:#E4E2DC"></div><div class="abs" style="left:620px;top:255.06px;width:60px;height:14px;line-height:14px;text-align:right;font-size:10px;font-weight:700;letter-spacing:0.4px;color:#000;white-space:nowrap">469</div><div class="abs" style="left:684.5px;top:255.06px;height:14px;line-height:14px;font-size:10px;font-weight:700;letter-spacing:0px;color:#000;white-space:nowrap">ΔΗΜΟΣ ΠΕΤΡΟΥΠΟΛΕΩΣ</div><div class="abs" style="left:620px;top:282.12px;width:307px;height:1px;background:#E4E2DC"></div><div class="abs" style="left:682px;top:269.12px;width:1px;height:14px;background:#E4E2DC"></div><div class="abs" style="left:620px;top:269.12px;width:60px;height:14px;line-height:14px;text-align:right;font-size:10px;font-weight:700;letter-spacing:0.4px;color:#000;white-space:nowrap">470</div><div class="abs" style="left:684.5px;top:269.12px;height:14px;line-height:14px;font-size:10px;font-weight:700;letter-spacing:0px;color:#000;white-space:nowrap">ΔΗΜΟΣ ΤΑΥΡΟΥ</div><div class="abs" style="left:620px;top:296.18px;width:307px;height:1px;background:#E4E2DC"></div><div class="abs" style="left:682px;top:283.18px;width:1px;height:14px;background:#E4E2DC"></div><div class="abs" style="left:620px;top:283.18px;width:60px;height:14px;line-height:14px;text-align:right;font-size:10px;font-weight:700;letter-spacing:0.4px;color:#000;white-space:nowrap">471</div><div class="abs" style="left:684.5px;top:283.18px;height:14px;line-height:14px;font-size:10px;font-weight:700;letter-spacing:0px;color:#000;white-space:nowrap">ΔΕΝΔΡΟΤΕΧΝΙΚΗ</div><div class="abs" style="left:620px;top:310.24px;width:307px;height:1px;background:#E4E2DC"></div><div class="abs" style="left:682px;top:297.24px;width:1px;height:14px;background:#E4E2DC"></div><div class="abs" style="left:620px;top:297.24px;width:60px;height:14px;line-height:14px;text-align:right;font-size:10px;font-weight:700;letter-spacing:0.4px;color:#000;white-space:nowrap">473</div><div class="abs" style="left:684.5px;top:297.24px;height:14px;line-height:14px;font-size:10px;font-weight:700;letter-spacing:0px;color:#000;white-space:nowrap">Υ.ΠΕ.ΧΩ.ΔΕ</div><div class="abs" style="left:620px;top:324.3px;width:307px;height:1px;background:#E4E2DC"></div><div class="abs" style="left:682px;top:311.3px;width:1px;height:14px;background:#E4E2DC"></div><div class="abs" style="left:620px;top:311.3px;width:60px;height:14px;line-height:14px;text-align:right;font-size:10px;font-weight:700;letter-spacing:0.4px;color:#000;white-space:nowrap">474</div><div class="abs" style="left:684.5px;top:311.3px;height:14px;line-height:14px;font-size:10px;font-weight:700;letter-spacing:0px;color:#000;white-space:nowrap">ASTRA ΑΣΦΑΛΙΣΤΙΚΗ</div><div class="abs" style="left:620px;top:338.36px;width:307px;height:1px;background:#E4E2DC"></div><div class="abs" style="left:682px;top:325.36px;width:1px;height:14px;background:#E4E2DC"></div><div class="abs" style="left:620px;top:325.36px;width:60px;height:14px;line-height:14px;text-align:right;font-size:10px;font-weight:700;letter-spacing:0.4px;color:#000;white-space:nowrap">475</div><div class="abs" style="left:684.5px;top:325.36px;height:14px;line-height:14px;font-size:10px;font-weight:700;letter-spacing:0px;color:#000;white-space:nowrap">ΔΗΜΟΣ ΑΧΑΡΝΩΝ</div><div class="abs" style="left:620px;top:352.42px;width:307px;height:1px;background:#E4E2DC"></div><div class="abs" style="left:682px;top:339.42px;width:1px;height:14px;background:#E4E2DC"></div><div class="abs" style="left:620px;top:339.42px;width:60px;height:14px;line-height:14px;text-align:right;font-size:10px;font-weight:700;letter-spacing:0.4px;color:#000;white-space:nowrap">476</div><div class="abs" style="left:684.5px;top:339.42px;height:14px;line-height:14px;font-size:10px;font-weight:700;letter-spacing:0px;color:#000;white-space:nowrap">ΔΗΜΟΣ ΚΑΜΑΤΕΡΟΥ</div><div class="abs" style="left:620px;top:366.48px;width:307px;height:1px;background:#E4E2DC"></div><div class="abs" style="left:682px;top:353.48px;width:1px;height:14px;background:#E4E2DC"></div><div class="abs" style="left:620px;top:353.48px;width:60px;height:14px;line-height:14px;text-align:right;font-size:10px;font-weight:700;letter-spacing:0.4px;color:#000;white-space:nowrap">477</div><div class="abs" style="left:684.5px;top:353.48px;height:14px;line-height:14px;font-size:10px;font-weight:700;letter-spacing:0px;color:#000;white-space:nowrap">ΔΗΜΟΣ ΜΟΣΧΑΤΟΥ</div><div class="abs" style="left:620px;top:380.54px;width:307px;height:1px;background:#E4E2DC"></div><div class="abs" style="left:682px;top:367.54px;width:1px;height:14px;background:#E4E2DC"></div><div class="abs" style="left:620px;top:367.54px;width:60px;height:14px;line-height:14px;text-align:right;font-size:10px;font-weight:700;letter-spacing:0.4px;color:#000;white-space:nowrap">478</div><div class="abs" style="left:684.5px;top:367.54px;height:14px;line-height:14px;font-size:10px;font-weight:700;letter-spacing:0px;color:#000;white-space:nowrap">ΔΗΜΟΣ Ν. ΨΥΧΙΚΟΥ</div><div class="abs" style="left:620px;top:381.6px;width:307px;height:13px;background:#000080;border:1px solid #c8c080"></div><div class="abs" style="left:682px;top:381.6px;width:1px;height:14px;background:#E4E2DC"></div><div class="abs" style="left:620px;top:381.6px;width:60px;height:14px;line-height:14px;text-align:right;font-size:10px;font-weight:700;letter-spacing:0.4px;color:#fff;white-space:nowrap">479</div><div class="abs" style="left:684.5px;top:381.6px;height:14px;line-height:14px;font-size:10px;font-weight:700;letter-spacing:0px;color:#fff;white-space:nowrap">EMAK</div><div class="abs" style="left:620px;top:406px;width:307px;height:2px;background:#808080"></div><div class="abs" style="left:620px;top:408px;width:307px;height:20px;background:#C0C0C0;border-top:1px solid #808080;border-bottom:1px solid #808080"></div><div class="abs" style="left:620px;top:408px;width:307px;height:20px;line-height:22px;text-align:center;font-size:14px;letter-spacing:0.5px;color:#000;white-space:nowrap;padding-left:0px">Επιλογή είδους</div><div class="abs" style="left:620px;top:427px;width:307px;height:14px;background:#D4D0C8;border-bottom:1px solid #909090"></div><div class="abs" style="left:682px;top:428px;width:1px;height:12px;background:#909090"></div><div class="abs" style="left:683px;top:428px;width:1px;height:12px;background:#fff"></div><div class="abs" style="left:623px;top:427px;height:14px;line-height:16px;font-size:9px;font-weight:700;letter-spacing:1.5px;white-space:nowrap">A/A</div><div class="abs" style="left:685px;top:427px;height:14px;line-height:16px;font-size:9px;font-weight:700;letter-spacing:0.6px;white-space:nowrap">Επωνυμία</div><div class="abs" style="left:620px;top:441px;width:307px;height:115px;background:#fff"></div><div class="abs" style="left:620px;top:455.0px;width:307px;height:1px;background:#E4E2DC"></div><div class="abs" style="left:682px;top:442.0px;width:1px;height:14px;background:#E4E2DC"></div><div class="abs" style="left:620px;top:442.0px;width:60px;height:14px;line-height:14px;text-align:right;font-size:10px;font-weight:700;letter-spacing:0.4px;color:#000;white-space:nowrap">109</div><div class="abs" style="left:684.5px;top:442.0px;height:14px;line-height:14px;font-size:10px;font-weight:700;letter-spacing:0px;color:#000;white-space:nowrap">Απορρίματα</div><div class="abs" style="left:620px;top:469.06px;width:307px;height:1px;background:#E4E2DC"></div><div class="abs" style="left:682px;top:456.06px;width:1px;height:14px;background:#E4E2DC"></div><div class="abs" style="left:620px;top:456.06px;width:60px;height:14px;line-height:14px;text-align:right;font-size:10px;font-weight:700;letter-spacing:0.4px;color:#000;white-space:nowrap">110</div><div class="abs" style="left:684.5px;top:456.06px;height:14px;line-height:14px;font-size:10px;font-weight:700;letter-spacing:0px;color:#000;white-space:nowrap">Χόρτα / Κλαδιά</div><div class="abs" style="left:620px;top:483.12px;width:307px;height:1px;background:#E4E2DC"></div><div class="abs" style="left:682px;top:470.12px;width:1px;height:14px;background:#E4E2DC"></div><div class="abs" style="left:620px;top:470.12px;width:60px;height:14px;line-height:14px;text-align:right;font-size:10px;font-weight:700;letter-spacing:0.4px;color:#000;white-space:nowrap">111</div><div class="abs" style="left:684.5px;top:470.12px;height:14px;line-height:14px;font-size:10px;font-weight:700;letter-spacing:0px;color:#000;white-space:nowrap">Βιολογική Ιλύς</div><div class="abs" style="left:620px;top:497.18px;width:307px;height:1px;background:#E4E2DC"></div><div class="abs" style="left:682px;top:484.18px;width:1px;height:14px;background:#E4E2DC"></div><div class="abs" style="left:620px;top:484.18px;width:60px;height:14px;line-height:14px;text-align:right;font-size:10px;font-weight:700;letter-spacing:0.4px;color:#000;white-space:nowrap">112</div><div class="abs" style="left:684.5px;top:484.18px;height:14px;line-height:14px;font-size:10px;font-weight:700;letter-spacing:0px;color:#000;white-space:nowrap">Αλουμίνιο</div><div class="abs" style="left:620px;top:511.24px;width:307px;height:1px;background:#E4E2DC"></div><div class="abs" style="left:682px;top:498.24px;width:1px;height:14px;background:#E4E2DC"></div><div class="abs" style="left:620px;top:498.24px;width:60px;height:14px;line-height:14px;text-align:right;font-size:10px;font-weight:700;letter-spacing:0.4px;color:#000;white-space:nowrap">113</div><div class="abs" style="left:684.5px;top:498.24px;height:14px;line-height:14px;font-size:10px;font-weight:700;letter-spacing:0px;color:#000;white-space:nowrap">Σίδηρος</div><div class="abs" style="left:620px;top:512.3px;width:307px;height:13px;background:#000080;border:1px solid #c8c080"></div><div class="abs" style="left:682px;top:512.3px;width:1px;height:14px;background:#E4E2DC"></div><div class="abs" style="left:620px;top:512.3px;width:60px;height:14px;line-height:14px;text-align:right;font-size:10px;font-weight:700;letter-spacing:0.4px;color:#fff;white-space:nowrap">114</div><div class="abs" style="left:684.5px;top:512.3px;height:14px;line-height:14px;font-size:10px;font-weight:700;letter-spacing:0px;color:#fff;white-space:nowrap">RDF</div><div class="abs" style="left:620px;top:539.36px;width:307px;height:1px;background:#E4E2DC"></div><div class="abs" style="left:682px;top:526.36px;width:1px;height:14px;background:#E4E2DC"></div><div class="abs" style="left:620px;top:526.36px;width:60px;height:14px;line-height:14px;text-align:right;font-size:10px;font-weight:700;letter-spacing:0.4px;color:#000;white-space:nowrap">115</div><div class="abs" style="left:684.5px;top:526.36px;height:14px;line-height:14px;font-size:10px;font-weight:700;letter-spacing:0px;color:#000;white-space:nowrap">BOA</div><div class="abs" style="left:620px;top:553.42px;width:307px;height:1px;background:#E4E2DC"></div><div class="abs" style="left:682px;top:540.42px;width:1px;height:14px;background:#E4E2DC"></div><div class="abs" style="left:620px;top:540.42px;width:60px;height:14px;line-height:14px;text-align:right;font-size:10px;font-weight:700;letter-spacing:0.4px;color:#000;white-space:nowrap">116</div><div class="abs" style="left:684.5px;top:540.42px;height:14px;line-height:14px;font-size:10px;font-weight:700;letter-spacing:0px;color:#000;white-space:nowrap">Ηλεκτρομαγνήτης</div><div class="abs" style="left:915px;top:441px;width:12px;height:115px;background:#E6E4DE"></div><div class="btn3d" style="left:915px;top:545px;width:12px;height:10px"></div><div class="abs" style="left:918.5px;top:549px;width:0;height:0;border-left:3px solid transparent;border-right:3px solid transparent;border-top:3px solid #000"></div><div class="abs" style="left:620px;top:555px;width:307px;height:2px;background:#808080"></div><div class="abs" style="left:620px;top:558px;width:307px;height:22px;border-top:1px solid #fff;border-bottom:1px solid #808080"></div><div class="abs" style="left:644px;top:561px;height:17px;line-height:17px;background:#C8C8C8;font-size:14px;letter-spacing:0.7px;white-space:nowrap;color:#000">Συμμετοχή στο φορτίο</div><div class="abs" style="left:834px;top:560.5px;width:60px;height:17px;background:#fff;border-top:1px solid #404040;border-left:1px solid #404040;border-right:1px solid #e0e0e0;border-bottom:1px solid #e0e0e0;box-shadow:1px 1px 0 #808080"></div><div class="abs" style="left:834px;top:560.5px;width:47px;height:17px;line-height:17px;text-align:right;font-size:13px;color:#000">50</div><div class="btn3d" style="left:882px;top:562px;width:10px;height:14px"></div><div class="abs" style="left:885px;top:568px;width:0;height:0;border-left:2.5px solid transparent;border-right:2.5px solid transparent;border-top:3px solid #000"></div><div class="abs" style="left:737px;top:584px;width:89px;height:33px;background:#D4D0C8;border:2px solid #202020;box-shadow:inset 1px 1px 0 #fff, inset -1px -1px 0 #808080"></div><svg class="abs" style="left:741px;top:594.5px" width="14" height="12" viewBox="0 0 14 12"><path d="M2 7 L5.5 10.5 L12.5 3.5" stroke="#1a2a90" stroke-width="2.6" fill="none"/><path d="M2 6.3 L5.5 9.8 L12.5 2.8" stroke="#18c818" stroke-width="2.2" fill="none"/></svg><div class="abs" style="left:767px;top:585px;height:33px;line-height:33px;font-size:12px;letter-spacing:0.2px;color:#000;white-space:nowrap">Αποδοχή</div><div class="abs" style="left:832px;top:584px;width:91px;height:33px;background:#D4D0C8;border-top:1px solid #fff;border-left:1px solid #fff;border-right:2px solid #404040;border-bottom:2px solid #404040;box-shadow:inset -1px -1px 0 #808080"></div><svg class="abs" style="left:836px;top:594.5px" width="12" height="12" viewBox="0 0 12 12"><path d="M2 2 L10 10 M10 2 L2 10" stroke="#b00000" stroke-width="2.6" fill="none"/></svg><div class="abs" style="left:862px;top:585px;height:33px;line-height:33px;font-size:12px;letter-spacing:0.8px;color:#000;white-space:nowrap">Ακύρωση</div><div class="win" style="left:904px;top:136px;width:318px;height:382px"></div><div class="tb" style="left:906.5px;top:138.5px;width:312.5px;height:10px;font-size:8px;line-height:10px;padding-left:1px;letter-spacing:0.2px">Περιγραφή φορτίου</div><div class="btn3d" style="left:1212px;top:140px;width:8px;height:7px"></div><div class="abs" style="left:1213.5px;top:138.5px;font-size:8px;line-height:9px;color:#000">×</div><div class="abs" style="left:908px;top:148px;width:310px;height:18px;background:#C0C0C0"></div><div class="abs" style="left:908px;top:148px;width:310px;height:18px;line-height:22px;text-align:center;font-size:14px;letter-spacing:0.65px;color:#000;white-space:nowrap;padding-left:0px">Ανάλυση φορτίου</div><div class="abs" style="left:910px;top:170px;height:18px;line-height:18px;font-size:12px;letter-spacing:0.7px;color:#000;white-space:nowrap">Κωδικός</div><div class="abs" style="left:979px;top:169.5px;width:50px;height:19.5px;background:#fff;border-top:1px solid #808080;border-left:1px solid #808080;border-right:2px solid #404040;border-bottom:2px solid #404040;overflow:hidden"></div><div class="abs" style="left:979px;top:169.5px;width:50px;height:19.5px;line-height:19.5px;text-align:left;padding:0 2px;font-size:14px;letter-spacing:0.6px;color:#000;white-space:nowrap;overflow:hidden">12083:</div><div class="abs" style="left:1033.5px;top:170px;height:18px;line-height:18px;font-size:12px;letter-spacing:0.9px;color:#000;white-space:nowrap">Αρ.κυκλοφορίας</div><div class="abs" style="left:1142px;top:169.5px;width:75px;height:19.5px;background:#fff;border-top:1px solid #808080;border-left:1px solid #808080;border-right:2px solid #404040;border-bottom:2px solid #404040;overflow:hidden"></div><div class="abs" style="left:1142px;top:169.5px;width:75px;height:19.5px;line-height:19.5px;text-align:right;padding:0 3px;font-size:14px;letter-spacing:0.4px;color:#000;white-space:nowrap;overflow:hidden">KHI 4555</div><div class="abs" style="left:910px;top:193px;height:18px;line-height:18px;font-size:12px;letter-spacing:0.9px;color:#000;white-space:nowrap">Ιδιοκτήτης</div><div class="abs" style="left:979px;top:192px;width:238px;height:19px;background:#fff;border-top:1px solid #808080;border-left:1px solid #808080;border-right:2px solid #404040;border-bottom:2px solid #404040;overflow:hidden"></div><div class="abs" style="left:979px;top:192px;width:238px;height:19px;line-height:19px;text-align:right;padding:0 4px;font-size:13px;letter-spacing:0.3px;color:#000;white-space:nowrap;overflow:hidden">EMAK</div><div class="abs" style="left:908px;top:214px;width:310px;height:1px;background:#808080"></div><div class="abs" style="left:908px;top:215px;width:310px;height:1px;background:#fff"></div><div class="abs" style="left:908px;top:217px;width:310px;height:35px;background:#D4D0C8;border-top:1px solid #fff;border-bottom:1px solid #808080"></div><div class="abs" style="left:910px;top:220px;width:2px;height:29px;border-left:1px solid #fff;border-right:1px solid #808080"></div><div class="abs" style="left:960px;top:220px;width:2px;height:29px;border-left:1px solid #808080;border-right:1px solid #fff"></div><div class="abs" style="left:1008.5px;top:220px;width:2px;height:29px;border-left:1px solid #808080;border-right:1px solid #fff"></div><svg class="abs" style="left:928px;top:223px" width="15" height="15" viewBox="0 0 15 15"><defs><linearGradient id="rgplus" x1="0" y1="0" x2="0" y2="1"><stop offset="0" stop-color="#ff6a50"/><stop offset="1" stop-color="#d81808"/></linearGradient></defs><rect x="0.5" y="0.5" width="14" height="14" rx="2" fill="url(#rgplus)" stroke="#c02010" stroke-width="0.8"/><path d="M7.5 3.5 V11.5 M3.5 7.5 H11.5" stroke="#fff" stroke-width="2"/></svg><svg class="abs" style="left:978px;top:223px" width="15" height="15" viewBox="0 0 15 15"><defs><linearGradient id="rgup" x1="0" y1="0" x2="0" y2="1"><stop offset="0" stop-color="#ff6a50"/><stop offset="1" stop-color="#d81808"/></linearGradient></defs><rect x="0.5" y="0.5" width="14" height="14" rx="2" fill="url(#rgup)" stroke="#c02010" stroke-width="0.8"/><path d="M3 10 L7.5 5 L12 10 Z" fill="#fff"/></svg><svg class="abs" style="left:1026px;top:223px" width="15" height="15" viewBox="0 0 15 15"><defs><linearGradient id="rgminus" x1="0" y1="0" x2="0" y2="1"><stop offset="0" stop-color="#ff6a50"/><stop offset="1" stop-color="#d81808"/></linearGradient></defs><rect x="0.5" y="0.5" width="14" height="14" rx="2" fill="url(#rgminus)" stroke="#c02010" stroke-width="0.8"/><path d="M3.5 7.5 H11.5" stroke="#fff" stroke-width="2.2"/></svg><div class="abs" style="left:905.5px;top:239px;width:60px;height:10px;line-height:10px;text-align:center;font-size:9px;color:#000;white-space:nowrap;transform:scaleX(.82)">Προσθήκη</div><div class="abs" style="left:955.5px;top:239px;width:60px;height:10px;line-height:10px;text-align:center;font-size:9px;color:#000;white-space:nowrap;transform:scaleX(.82)">Μεταβολή</div><div class="abs" style="left:1004px;top:239px;width:60px;height:10px;line-height:10px;text-align:center;font-size:9px;color:#000;white-space:nowrap;transform:scaleX(.82)">Διαγραφή</div><div class="abs" style="left:908px;top:252px;width:311px;height:226px;background:#fff;border-top:1px solid #808080;border-left:1px solid #808080"></div><div class="abs" style="left:909px;top:253px;width:227px;height:13.5px;background:#D4D0C8;border-bottom:1px solid #a0a0a0"></div><div class="abs" style="left:967.5px;top:254px;width:1px;height:12px;background:#909090"></div><div class="abs" style="left:968.5px;top:254px;width:1px;height:12px;background:#fff"></div><div class="abs" style="left:1085.5px;top:254px;width:1px;height:12px;background:#909090"></div><div class="abs" style="left:1086.5px;top:254px;width:1px;height:12px;background:#fff"></div><div class="abs" style="left:1134.5px;top:254px;width:1px;height:12px;background:#909090"></div><div class="abs" style="left:1135.5px;top:254px;width:1px;height:12px;background:#fff"></div><div class="abs" style="left:911px;top:253px;height:13px;line-height:13px;font-size:9px;font-weight:700;letter-spacing:0.9px;color:#000;white-space:nowrap">Πελάτης</div><div class="abs" style="left:970.5px;top:253px;height:13px;line-height:13px;font-size:9px;font-weight:700;letter-spacing:0.9px;color:#000;white-space:nowrap">Φορτίο</div><div class="abs" style="left:1088.5px;top:253px;height:13px;line-height:13px;font-size:9px;font-weight:700;letter-spacing:0.9px;color:#000;white-space:nowrap">Ποσοστό</div><div class="abs" style="left:919.5px;top:268.5px;width:216px;height:11.5px;background:#000080"></div><div class="abs" style="left:913.5px;top:274px;width:1px;height:13px;background:#a0a0a0"></div><div class="abs" style="left:913.5px;top:274px;width:6px;height:1px;background:#a0a0a0"></div><div class="abs" style="left:913.5px;top:287px;width:6px;height:1px;background:#a0a0a0"></div><div class="abs" style="left:921px;top:268.5px;height:11.5px;line-height:11.5px;font-size:9px;font-weight:700;letter-spacing:0.95px;color:#fff;white-space:nowrap">EMAK</div><div class="abs" style="left:970.5px;top:268.5px;height:11.5px;line-height:11.5px;font-size:9px;font-weight:700;letter-spacing:0.95px;color:#fff;white-space:nowrap">RDF</div><div class="abs" style="left:1089px;top:268.5px;height:11.5px;line-height:11.5px;font-size:9px;font-weight:700;letter-spacing:0.95px;color:#fff;white-space:nowrap">50</div><div class="abs" style="left:921px;top:281.5px;height:11.5px;line-height:11.5px;font-size:9px;font-weight:700;letter-spacing:0.95px;color:#000;white-space:nowrap">EMAK</div><div class="abs" style="left:970.5px;top:281.5px;height:11.5px;line-height:11.5px;font-size:9px;font-weight:700;letter-spacing:0.95px;color:#000;white-space:nowrap">Ηλεκτρομαγνήτης</div><div class="abs" style="left:1089px;top:281.5px;height:11.5px;line-height:11.5px;font-size:9px;font-weight:700;letter-spacing:0.95px;color:#000;white-space:nowrap">50</div><div class="abs" style="left:908px;top:477px;width:311px;height:1px;background:#808080"></div><div class="abs" style="left:1024px;top:481.5px;width:90px;height:34.5px;background:#D4D0C8;border-top:1px solid #fff;border-left:1px solid #fff;border-right:2px solid #404040;border-bottom:2px solid #404040;box-shadow:inset -1px -1px 0 #808080"></div><svg class="abs" style="left:1030px;top:492.75px" width="14" height="12" viewBox="0 0 14 12"><path d="M2 7 L5.5 10.5 L12.5 3.5" stroke="#1a2a90" stroke-width="2.6" fill="none"/><path d="M2 6.3 L5.5 9.8 L12.5 2.8" stroke="#18c818" stroke-width="2.2" fill="none"/></svg><div class="abs" style="left:1057px;top:482.5px;height:34.5px;line-height:34.5px;font-size:12px;letter-spacing:0.2px;color:#000;white-space:nowrap">Αποδοχή</div><div class="abs" style="left:1118.5px;top:481.5px;width:91.0px;height:34.5px;background:#D4D0C8;border-top:1px solid #fff;border-left:1px solid #fff;border-right:2px solid #404040;border-bottom:2px solid #404040;box-shadow:inset -1px -1px 0 #808080"></div><svg class="abs" style="left:1125px;top:492.75px" width="12" height="12" viewBox="0 0 12 12"><path d="M2 2 L10 10 M10 2 L2 10" stroke="#b00000" stroke-width="2.6" fill="none"/></svg><div class="abs" style="left:1150px;top:482.5px;height:34.5px;line-height:34.5px;font-size:12px;letter-spacing:0.3px;color:#000;white-space:nowrap">Ακύρωση</div></body></html>
